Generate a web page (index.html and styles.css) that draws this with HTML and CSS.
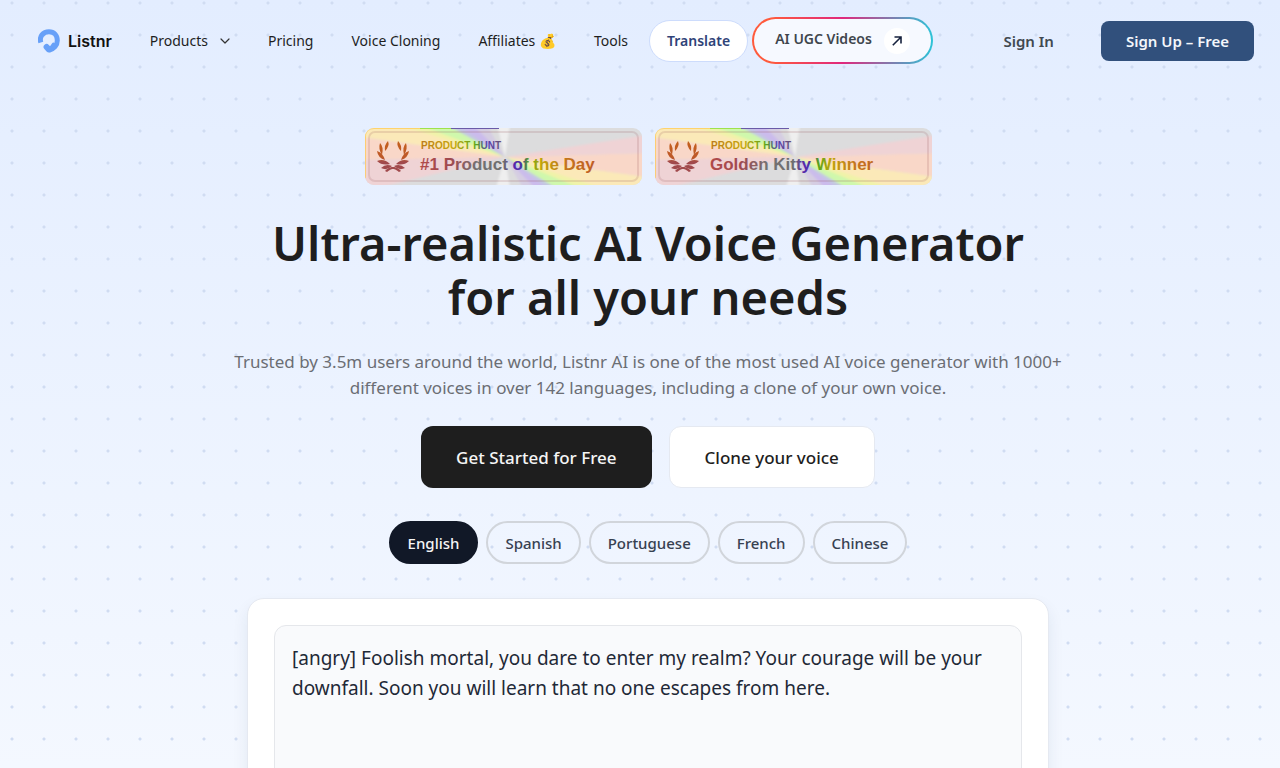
FILE: index.html
```
<!DOCTYPE html>
<html lang="en">
<head>
    <meta charset="UTF-8">
    <meta name="viewport" content="width=device-width, initial-scale=1.0">
    <title>Listnr AI</title>
    <link rel="stylesheet" href="styles.css">
</head>
<body>
    <header class="header">
        <a href="#" class="logo">
            <svg width="22" height="24" viewBox="0 0 22 24" fill="none" stroke="#67a0f8" stroke-linecap="round" stroke-linejoin="round">
                <path d="M2.800 13.500C1 7.500 5 2.700 11 2.700C16 2.700 19.300 6.300 19.300 11.500C19.300 16 16 20 11 21.200" stroke-width="5" stroke-linecap="butt"/>
                <path d="M8.600 18L10.800 20.400" stroke-width="6"/>
                <path d="M11 20C13 18.500 14.500 17 15.500 15" stroke-width="3"/>
            </svg>
            <span>Listnr</span>
        </a>
        <nav class="nav">
            <a href="#" class="nav-products">Products
                <svg width="10" height="6" viewBox="0 0 10 6" fill="none" stroke="#333" stroke-width="1.200" stroke-linecap="round" stroke-linejoin="round"><path d="M1 1L5 5L9 1"/></svg>
            </a>
            <a href="#">Pricing</a>
            <a href="#">Voice Cloning</a>
            <a href="#">Affiliates 💰</a>
            <a href="#">Tools</a>
        </nav>
        <div class="pills">
            <a href="#" class="translate">Translate</a>
            <a href="#" class="ugc">
                <span class="ugc-label">AI UGC Videos</span>
                <span class="ugc-icon">
                    <svg width="10" height="10" viewBox="0 0 10 10" fill="none" stroke="#16213d" stroke-width="1.600"><path d="M0.800 9.200L8.800 1.200M2.500 1H9V7.500"/></svg>
                </span>
            </a>
        </div>
        <div class="account">
            <a href="#" class="sign-in">Sign In</a>
            <a href="#" class="sign-up">Sign Up – Free</a>
        </div>
    </header>

    <main class="hero">
        <svg width="0" height="0" class="defs">
            <defs>
                <clipPath id="badgeClip"><rect width="277" height="57" rx="9"/></clipPath>
                <linearGradient id="smallText" gradientUnits="userSpaceOnUse" x1="56" y1="0" x2="134" y2="0">
                    <stop offset="0" stop-color="#bd7a1c"/>
                    <stop offset="0.400" stop-color="#c6a60e"/>
                    <stop offset="0.700" stop-color="#62a51c"/>
                    <stop offset="0.850" stop-color="#5540b0"/>
                    <stop offset="1" stop-color="#65507c"/>
                </linearGradient>
                <linearGradient id="bigText" gradientUnits="userSpaceOnUse" x1="56" y1="30" x2="232" y2="38">
                    <stop offset="0" stop-color="#b04a49"/>
                    <stop offset="0.170" stop-color="#a04a50"/>
                    <stop offset="0.320" stop-color="#747172"/>
                    <stop offset="0.470" stop-color="#6e6e6e"/>
                    <stop offset="0.530" stop-color="#5628ac"/>
                    <stop offset="0.570" stop-color="#4c35a5"/>
                    <stop offset="0.610" stop-color="#54a41c"/>
                    <stop offset="0.680" stop-color="#bfa50c"/>
                    <stop offset="0.820" stop-color="#c4761d"/>
                    <stop offset="1" stop-color="#be5a25"/>
                </linearGradient>
                <linearGradient id="laurelFill" gradientUnits="userSpaceOnUse" x1="0" y1="13" x2="0" y2="44">
                    <stop offset="0" stop-color="#c4601c"/>
                    <stop offset="0.550" stop-color="#bd5829"/>
                    <stop offset="0.680" stop-color="#a0494c"/>
                    <stop offset="1" stop-color="#a0494c"/>
                </linearGradient>
                <filter id="soften"><feGaussianBlur stdDeviation="1"/></filter>
                <g id="badgeBase" clip-path="url(#badgeClip)">
                    <rect width="277" height="57" fill="#dcdcdd"/>
                    <g filter="url(#soften)">
                        <path d="M140 29L-5 9V32Z" fill="#f9d7c8"/>
                        <path d="M140 29L-5 32V62H4Z" fill="#efd3d5"/>
                        <path d="M140 29L-5 9V-5H40Z" fill="#fbe9b8"/>
                        <path d="M140 29L34 -3H62Z" fill="#f0f3a9"/>
                        <path d="M140 29L54 -3H84Z" fill="#cff8ac"/>
                        <path d="M140 29L82 -3H98Z" fill="#c4c8e2"/>
                        <path d="M140 29L92 -3H110Z" fill="#cbbbec"/>
                        <path d="M140 29L108 -3H122Z" fill="#d5cde2"/>
                        <path d="M132 -3H145L140 29L145 60H131L140 29Z" fill="#efefef"/>
                        <path d="M140 29L158 60H174Z" fill="#d5cde2"/>
                        <path d="M140 29L170 60H187Z" fill="#cbbbec"/>
                        <path d="M140 29L182 60H196Z" fill="#c4c8e2"/>
                        <path d="M140 29L191 60H220Z" fill="#cff8ac"/>
                        <path d="M140 29L215 60H245Z" fill="#f0f3a9"/>
                        <path d="M140 29L237 60H282V49Z" fill="#fbe9b8"/>
                        <path d="M140 29L282 49V25Z" fill="#f9d7c8"/>
                        <path d="M140 29L282 25V7Z" fill="#efd3d5"/>
                    </g>
                    <path d="M0 50V9Q0 0 9 0H55" fill="none" stroke="#ffc94d" stroke-opacity="0.700" stroke-width="2"/>
                    <path d="M55 0H86" stroke="#9fe24c" stroke-width="2"/>
                    <path d="M86 0H134" stroke="#6a5aa8" stroke-width="2"/>
                    <rect x="4" y="4" width="269" height="49" rx="6" fill="none" stroke="#8c4a50" stroke-opacity="0.160" stroke-width="2"/>
                </g>
                <g id="leaves">
                    <path d="M23 13Q25 18 20 23Q19 17 23 13Z"/>
                    <path d="M15 15Q19 19 17 27Q13 21 15 15Z"/>
                    <path d="M12 23Q18 25 20 32Q13 30 12 23Z"/>
                    <path d="M12 33Q19 30 25 36Q17 38 12 33Z"/>
                    <path d="M16 40Q21 35 27 38Q22 43 16 40Z"/>
                    <path d="M20 43Q23 39 29 39L31 40Q25 41 22 44Z"/>
                </g>
                <g id="laurel" fill="url(#laurelFill)">
                    <use href="#leaves"/>
                    <use href="#leaves" transform="matrix(-1 0 0 1 56 0)"/>
                </g>
            </defs>
        </svg>
        <div class="badges">
            <svg class="badge" width="277" height="57" viewBox="0 0 277 57">
                <use href="#badgeBase"/>
                <use href="#laurel"/>
                <text x="56" y="21" class="badge-small">PRODUCT HUNT</text>
                <text x="55" y="42" class="badge-big">#1 Product of the Day</text>
            </svg>
            <svg class="badge" width="277" height="57" viewBox="0 0 277 57">
                <use href="#badgeBase"/>
                <use href="#laurel"/>
                <text x="56" y="21" class="badge-small">PRODUCT HUNT</text>
                <text x="55" y="42" class="badge-big">Golden Kitty Winner</text>
            </svg>
        </div>
        <h1 class="title">Ultra-realistic AI Voice Generator<br>for all your needs</h1>
        <p class="subtitle">Trusted by 3.5m users around the world, Listnr AI is one of the most used AI voice generator with 1000+ different voices in over 142 languages, including a clone of your own voice.</p>
        <div class="actions">
            <button class="button button-dark">Get Started for Free</button>
            <button class="button button-light">Clone your voice</button>
        </div>
        <div class="languages">
            <button class="language active">English</button>
            <button class="language">Spanish</button>
            <button class="language">Portuguese</button>
            <button class="language">French</button>
            <button class="language">Chinese</button>
        </div>
        <section class="editor">
            <textarea class="editor-text" aria-label="Text to speak" spellcheck="false">[angry] Foolish mortal, you dare to enter my realm? Your courage will be your downfall. Soon you will learn that no one escapes from here.</textarea>
        </section>
    </main>
</body>
</html>
```

FILE: styles.css
```
* {
    box-sizing: border-box;
}
body {
    margin: 0;
    height: 100vh;
    overflow: hidden;
    font-family: "Noto Sans", sans-serif;
    color: #1e1e1e;
    background-image: radial-gradient(circle, #d0dcf2 1px, transparent 2px), linear-gradient(#e3edff, #f4f8ff);
    background-size: 32px 32px, 100% 100%;
    background-position: -4px -13px, 0 0;
}
a {
    color: inherit;
    text-decoration: none;
}
button {
    font-family: inherit;
    cursor: pointer;
}
.header {
    display: flex;
    align-items: center;
    height: 81px;
    padding: 0 26px 0 38px;
    font-size: 14px;
}
.logo {
    display: flex;
    align-items: center;
    gap: 8px;
    margin-right: 38px;
    font-family: Inter, sans-serif;
    font-size: 16px;
    font-weight: 600;
    color: #111;
}
.nav {
    display: flex;
    gap: 38px;
    line-height: 20px;
    white-space: nowrap;
}
.nav-products {
    display: flex;
    align-items: center;
    gap: 12px;
}
.pills {
    display: flex;
    align-items: center;
    gap: 4px;
    margin-left: 21px;
    font-weight: 600;
    white-space: nowrap;
}
.translate {
    padding: 10px 17px;
    line-height: 20px;
    border: 1px solid #cddcfc;
    border-radius: 21px;
    background-color: white;
    color: #2f4378;
}
.ugc {
    display: flex;
    align-items: center;
    gap: 12px;
    height: 47px;
    padding: 0 21px;
    border: 2px solid transparent;
    border-radius: 24px;
    background: linear-gradient(#f6f9ff, #f6f9ff) padding-box, linear-gradient(90deg, #ff5a3c 10%, #e0287d 50%, #2cc4d8) border-box;
    color: #3f464d;
}
.ugc-label {
    padding-bottom: 5px;
}
.ugc-icon {
    display: flex;
    align-items: center;
    justify-content: center;
    width: 26px;
    height: 26px;
    border-radius: 50%;
    background-color: white;
}
.account {
    display: flex;
    align-items: center;
    gap: 47px;
    margin-left: auto;
    font-size: 15px;
    font-weight: 600;
    white-space: nowrap;
}
.sign-in {
    color: #414950;
}
.sign-up {
    padding: 10px 25px;
    line-height: 20px;
    border-radius: 8px;
    background-color: #31507c;
    color: #f4f7fb;
}
.hero {
    display: flex;
    flex-direction: column;
    align-items: center;
    padding: 47px 0 0 16px;
}
.defs {
    position: absolute;
}
.badges {
    display: flex;
    gap: 13px;
}
.badge-small {
    font: bold 10px "Liberation Sans", sans-serif;
    fill: url(#smallText);
}
.badge-big {
    font: bold 17px "Liberation Sans", sans-serif;
    fill: url(#bigText);
}
.title {
    margin: 31px 0 25px;
    font-size: 47px;
    font-weight: 600;
    line-height: 54px;
    text-align: center;
}
.subtitle {
    max-width: 840px;
    margin: 0;
    font-size: 17px;
    line-height: 26px;
    text-align: center;
    color: #6b6e74;
}
.actions {
    display: flex;
    align-items: center;
    gap: 17px;
    margin-top: 25px;
}
.button {
    height: 62px;
    padding: 0 35px;
    border: 0;
    border-radius: 12px;
    font-size: 17px;
    font-weight: 500;
}
.button-dark {
    background-color: #1e1e1e;
    color: #f5f5f5;
}
.button-light {
    border: 1px solid #e5e9f1;
    background-color: white;
    color: #1e1e1e;
}
.languages {
    display: flex;
    gap: 8px;
    margin-top: 33px;
}
.language {
    height: 43px;
    padding: 0 17px;
    border: 2px solid #d1d5db;
    border-radius: 22px;
    background-color: transparent;
    font-size: 15px;
    font-weight: 500;
    color: #374151;
}
.language.active {
    border-color: #111827;
    background-color: #111827;
    color: #f5f5f5;
}
.editor {
    width: 802px;
    max-width: 100%;
    margin-top: 34px;
    padding: 26px;
    border: 1px solid #e5e9f1;
    border-radius: 17px;
    background-color: white;
    box-shadow: 0 8px 16px rgba(30, 50, 90, 0.08);
}
.editor-text {
    display: block;
    width: 100%;
    height: 220px;
    padding: 17px;
    border: 1px solid #e5e7eb;
    border-radius: 12px;
    outline: none;
    resize: none;
    background-color: #f9fafc;
    font-family: inherit;
    font-size: 19px;
    line-height: 30px;
    color: #1f2937;
}
```
